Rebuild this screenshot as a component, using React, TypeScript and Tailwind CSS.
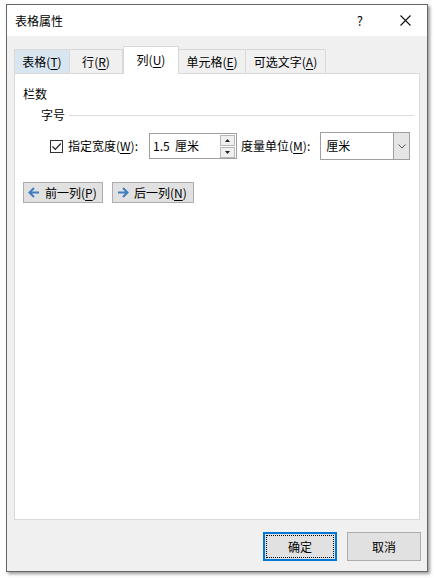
const font = {
  fontFamily: '"Noto Sans CJK SC", "Noto Sans", sans-serif',
}

type Tab = { label: string; key: string; w: string; active?: boolean; hover?: boolean }

const tabs: Tab[] = [
  { label: "表格", key: "T", w: "w-[56px]", hover: true },
  { label: "行", key: "R", w: "w-[54px]" },
  { label: "列", key: "U", w: "w-[56px]", active: true },
  { label: "单元格", key: "E", w: "w-[68px]" },
  { label: "可选文字", key: "A", w: "w-[81px]" },
]

function Mnemonic({ label, k }: { label: string; k: string }) {
  return (
    <span>
      {label}(<span className="underline underline-offset-2">{k}</span>)
    </span>
  )
}

function ArrowLeft() {
  return (
    <svg width="12" height="11" viewBox="0 0 12 11">
      <path d="M11 5.5H2M6 1L1.5 5.5L6 10" fill="none" stroke="#3f7fc0" strokeWidth="2" />
    </svg>
  )
}

function ArrowRight() {
  return (
    <svg width="12" height="11" viewBox="0 0 12 11">
      <path d="M1 5.5H10M6 1L10.5 5.5L6 10" fill="none" stroke="#3f7fc0" strokeWidth="2" />
    </svg>
  )
}

export default function App() {
  return (
    <div className="min-h-screen bg-white pl-[6px] pt-[4px] text-[12px] text-black" style={font}>
      <div className="flex h-[568px] w-[422px] flex-col border border-[#666666] bg-[#f0f0f0] shadow-[2px_2px_3px_rgba(0,0,0,0.4)]">
        {/* title bar */}
        <div className="flex h-[31px] items-center bg-white pl-[8px]">
          <span className="leading-none">表格属性</span>
          <span className="ml-auto mr-[37px] text-[13px] leading-none">?</span>
          <svg width="11" height="11" viewBox="0 0 11 11" className="mr-[16px]">
            <path d="M0.5 0.5L10.5 10.5M10.5 0.5L0.5 10.5" stroke="#111" strokeWidth="1.1" />
          </svg>
        </div>

        {/* tabs */}
        <div className="px-[7px] pt-[10px]">
          <div className="flex h-[27px] items-end">
            {tabs.map((t) =>
              t.active ? (
                <div
                  key={t.key}
                  className={`relative z-10 -mb-px flex h-[28px] ${t.w} items-center justify-center border border-b-0 border-[#d9d9d9] bg-white pb-[1px]`}
                >
                  <Mnemonic label={t.label} k={t.key} />
                </div>
              ) : (
                <div
                  key={t.key}
                  className={`flex h-[24px] ${t.w} items-center justify-center border border-b-0 border-[#d9d9d9] ${
                    t.hover ? "bg-[#d8e6f2]" : "bg-[#f0f0f0]"
                  } -ml-px first:ml-0`}
                >
                  <Mnemonic label={t.label} k={t.key} />
                </div>
              )
            )}
          </div>

          {/* panel */}
          <div className="h-[447px] w-[406px] border border-[#d9d9d9] bg-white pl-[8px] pt-[12px]">
            <div className="leading-[16px]">栏数</div>

            <div className="mt-[5px] flex items-center pl-[18px]">
              <span className="leading-[16px]">字号</span>
              <div className="ml-[4px] mr-[5px] h-px flex-1 bg-[#dcdcdc]" />
            </div>

            <div className="mt-[9px] flex items-center pl-[27px]">
              <div className="flex h-[13px] w-[13px] items-center justify-center border border-[#333333] bg-white">
                <svg width="11" height="11" viewBox="0 0 11 11">
                  <path d="M1.5 5.5L4.3 8.3L9.8 2.5" fill="none" stroke="#222" strokeWidth="1.2" />
                </svg>
              </div>
              <span className="ml-[5px]">
                指定宽度(<span className="underline underline-offset-2">W</span>):
              </span>

              <div className="ml-[11px] flex h-[26px] w-[88px] items-center border border-[#a0a0a0] bg-white">
                <span className="pl-[3px]">1.5&nbsp;&nbsp;厘米</span>
                <div className="ml-auto mr-[1px] flex flex-col gap-px">
                  <div className="flex h-[11px] w-[15px] items-center justify-center border border-[#b8b8b8] bg-[#f0f0f0]">
                    <svg width="5" height="3" viewBox="0 0 5 3">
                      <path d="M0 3L2.5 0L5 3Z" fill="#222" />
                    </svg>
                  </div>
                  <div className="flex h-[11px] w-[15px] items-center justify-center border border-[#b8b8b8] bg-[#f0f0f0]">
                    <svg width="5" height="3" viewBox="0 0 5 3">
                      <path d="M0 0L2.5 3L5 0Z" fill="#222" />
                    </svg>
                  </div>
                </div>
              </div>

              <span className="ml-[4px]">
                度量单位(<span className="underline underline-offset-2">M</span>):
              </span>

              <div className="ml-[10px] flex h-[28px] w-[90px] items-stretch border border-[#a0a0a0] bg-white">
                <span className="flex flex-1 items-center pl-[5px]">厘米</span>
                <div className="flex w-[16px] items-center justify-center border-l border-[#a0a0a0] bg-[#e5e5e5]">
                  <svg width="8" height="5" viewBox="0 0 8 5">
                    <path d="M0.5 0.5L4 4L7.5 0.5" fill="none" stroke="#555" strokeWidth="1" />
                  </svg>
                </div>
              </div>
            </div>

            <div className="mt-[22px] flex gap-[9px]">
              <div className="flex h-[21px] w-[80px] items-center gap-[5px] border border-[#adadad] bg-[#e1e1e1] pl-[4px]">
                <ArrowLeft />
                <span>
                  前一列(<span className="underline underline-offset-2">P</span>)
                </span>
              </div>
              <div className="flex h-[21px] w-[82px] items-center gap-[5px] border border-[#adadad] bg-[#e1e1e1] pl-[4px]">
                <ArrowRight />
                <span>
                  后一列(<span className="underline underline-offset-2">N</span>)
                </span>
              </div>
            </div>
          </div>
        </div>

        {/* footer */}
        <div className="flex justify-end gap-[10px] pr-[6px] pt-[12px]">
          <div className="flex h-[29px] w-[74px] items-center justify-center border-2 border-[#0078d7] bg-[#e1e1e1] p-px">
            <div className="flex h-full w-full items-center justify-center border border-dotted border-black">
              确定
            </div>
          </div>
          <div className="flex h-[29px] w-[74px] items-center justify-center border border-[#adadad] bg-[#e1e1e1]">
            取消
          </div>
        </div>
      </div>
    </div>
  )
}
